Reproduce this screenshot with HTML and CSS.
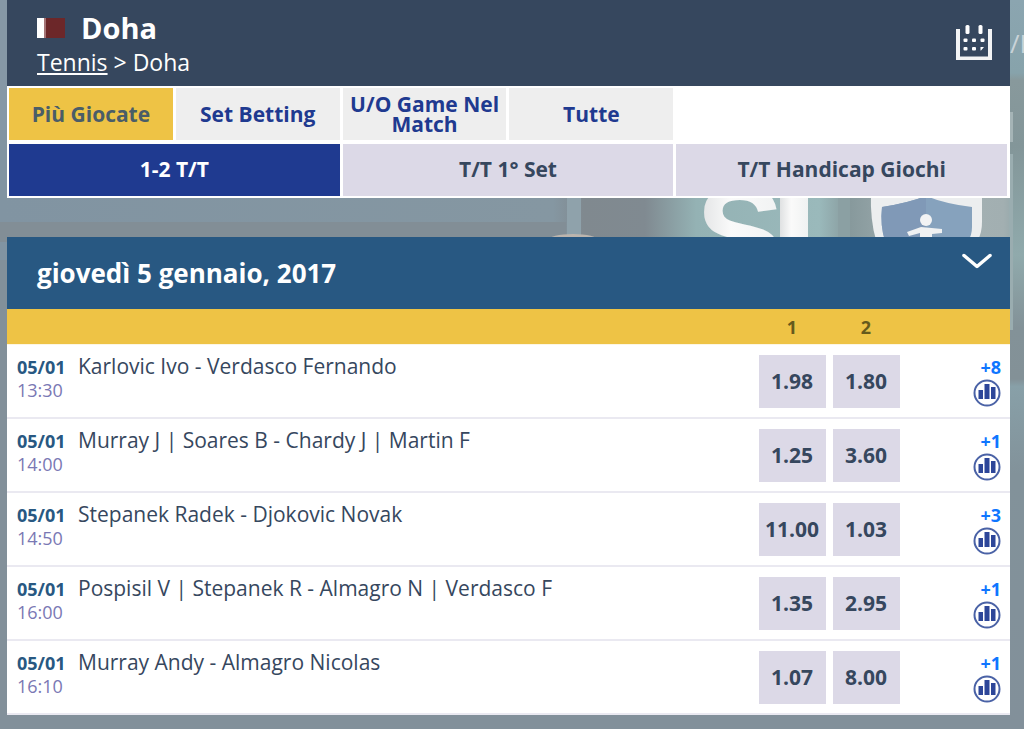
FILE: index.html
```html
<!DOCTYPE html>
<html lang="it">
<head>
    <meta charset="UTF-8">
    <meta name="viewport" content="width=device-width, initial-scale=1.0">
    <title>Doha - Tennis</title>
    <link rel="stylesheet" href="styles.css">
</head>
<body>
    <!-- Backdrop artwork -->
    <svg class="backdrop" viewBox="0 0 1024 729" preserveAspectRatio="xMaxYMin slice" aria-hidden="true">
        <defs>
            <linearGradient id="wall" x1="0" x2="1" y1="0" y2="0">
                <stop offset="0" stop-color="#8194a2"/>
                <stop offset="0.54" stop-color="#8597a2"/>
                <stop offset="0.57" stop-color="#80898f"/>
                <stop offset="0.63" stop-color="#808a91"/>
                <stop offset="0.68" stop-color="#94b2b4"/>
                <stop offset="0.8" stop-color="#9ab9bb"/>
                <stop offset="0.83" stop-color="#87999c"/>
                <stop offset="0.9" stop-color="#a5b2b5"/>
                <stop offset="0.98" stop-color="#a2afb1"/>
                <stop offset="1" stop-color="#8aa2a5"/>
            </linearGradient>
            <linearGradient id="side" x1="0" x2="0" y1="0" y2="1">
                <stop offset="0" stop-color="#8ba5b0"/>
                <stop offset="0.1" stop-color="#87a3ab"/>
                <stop offset="0.11" stop-color="#88999c"/>
                <stop offset="0.2" stop-color="#839699"/>
                <stop offset="0.35" stop-color="#90aaac"/>
                <stop offset="0.45" stop-color="#839298"/>
                <stop offset="0.52" stop-color="#839197"/>
                <stop offset="0.53" stop-color="#88a0a8"/>
                <stop offset="0.65" stop-color="#82929a"/>
                <stop offset="1" stop-color="#82909a"/>
            </linearGradient>
            <linearGradient id="letter" x1="0" x2="1" y1="0" y2="0">
                <stop offset="0" stop-color="#dfe1e2"/>
                <stop offset="0.4" stop-color="#fafafa"/>
                <stop offset="1" stop-color="#f0f2f2"/>
            </linearGradient>
        </defs>
        <rect width="1024" height="729" fill="#82909a"/>
        <rect width="1024" height="260" fill="url(#wall)"/>
        <rect y="222" width="566" height="20" fill="#828e96"/>
        <rect y="0" width="8" height="130" fill="#8698a6"/>
        <rect x="567" y="190" width="14" height="50" fill="#8fa2ab"/>
        <ellipse cx="573" cy="240" rx="25" ry="6" fill="#bcb5ae"/>
        <rect x="838" y="190" width="12" height="50" fill="#8ba0a3"/>
        <text class="sign" x="696" y="279" fill="url(#letter)">S</text>
        <rect x="780" y="190" width="28" height="50" fill="url(#letter)"/>
        <path d="M871 192h111v30q0 10-4 18H876q-6-20-5-48z" fill="#eceeef"/>
        <path d="M882 207q26-4 44-11 20 8 46 11v20q0 8-4 14h-83q-5-16-3-34z" fill="#86a2bd"/>
        <path d="M882 207q26-4 44-11v45h-41q-5-16-3-34z" fill="#8099b7"/>
        <circle cx="926" cy="220" r="6" fill="#f2f3f4"/>
        <path d="M907 232l14-5 21 2v4l-10 1v6h-12v-7l-11 3z" fill="#eff1f2"/>
        <rect x="1010" width="14" height="729" fill="url(#side)"/>
        <rect x="1009" y="112" width="4" height="30" fill="#a5b4b6"/>
        <rect x="1009" y="154" width="4" height="176" fill="#9aadb0"/>
        <text class="sign-small" x="1010" y="53">/I</text>
    </svg>

    <div class="container">
        <header class="header">
            <div>
                <h1>
                    <svg class="flag" viewBox="0 0 28 20" aria-hidden="true">
                        <rect width="28" height="20" fill="#6c2729"/>
                        <rect width="7" height="20" fill="#fff"/>
                        <rect x="7" width="2" height="20" fill="#a47476"/>
                    </svg>
                    Doha
                </h1>
                <nav class="breadcrumb"><a href="#">Tennis</a> &gt; Doha</nav>
            </div>
            <button class="icon-btn calendar-btn" aria-label="Calendario">
                <svg width="36" height="36" viewBox="0 0 36 36" fill="#fff">
                    <path d="M0 4h4v27.500h28V4H36v31H0z" fill-opacity="0.94"/>
                    <rect x="9.500" y="0" width="4" height="9" rx="1.500"/>
                    <rect x="22.500" y="0" width="4" height="9" rx="1.500"/>
                    <rect x="7.500" y="13.500" width="4" height="3.500" rx="1"/>
                    <rect x="16" y="13.500" width="4" height="3.500" rx="1"/>
                    <rect x="24.500" y="13.500" width="4" height="3.500" rx="1"/>
                    <rect x="7.500" y="22" width="4" height="3.500" rx="1"/>
                    <rect x="16" y="22" width="4" height="3.500" rx="1"/>
                    <path d="M24.500 22H28l-3 3.500h-.5z"/>
                </svg>
            </button>
        </header>

        <div class="tabs">
            <button class="tab active">Più Giocate</button>
            <button class="tab">Set Betting</button>
            <button class="tab">U/O Game Nel Match</button>
            <button class="tab">Tutte</button>
            <button class="tab market market-first active">1-2 T/T</button>
            <button class="tab market">T/T 1° Set</button>
            <button class="tab market">T/T Handicap Giochi</button>
        </div>

        <section class="events">
            <div class="date-bar">
                <h2>giovedì 5 gennaio, 2017</h2>
                <button class="icon-btn" aria-label="Chiudi">
                    <svg width="30" height="16" viewBox="0 0 30 16" fill="none" stroke="#fff" stroke-width="3.500" stroke-linecap="round" stroke-linejoin="round">
                        <path d="M2 2.500L15 13.500L28 2.500"/>
                    </svg>
                </button>
            </div>

            <table>
                <thead>
                    <tr>
                        <th class="col-time"></th>
                        <th></th>
                        <th class="col-odd">1</th>
                        <th class="col-odd">2</th>
                        <th class="col-more"></th>
                    </tr>
                </thead>
                <tbody>
                    <tr>
                        <td class="time"><b>05/01</b>13:30</td>
                        <td class="match">Karlovic Ivo - Verdasco Fernando</td>
                        <td><button class="odd">1.98</button></td>
                        <td><button class="odd">1.80</button></td>
                        <td class="more"><a href="#">+8 <svg class="stats"><use href="#stats-icon"/></svg></a></td>
                    </tr>
                    <tr>
                        <td class="time"><b>05/01</b>14:00</td>
                        <td class="match">Murray J | Soares B - Chardy J | Martin F</td>
                        <td><button class="odd">1.25</button></td>
                        <td><button class="odd">3.60</button></td>
                        <td class="more"><a href="#">+1 <svg class="stats"><use href="#stats-icon"/></svg></a></td>
                    </tr>
                    <tr>
                        <td class="time"><b>05/01</b>14:50</td>
                        <td class="match">Stepanek Radek - Djokovic Novak</td>
                        <td><button class="odd">11.00</button></td>
                        <td><button class="odd">1.03</button></td>
                        <td class="more"><a href="#">+3 <svg class="stats"><use href="#stats-icon"/></svg></a></td>
                    </tr>
                    <tr>
                        <td class="time"><b>05/01</b>16:00</td>
                        <td class="match">Pospisil V | Stepanek R - Almagro N | Verdasco F</td>
                        <td><button class="odd">1.35</button></td>
                        <td><button class="odd">2.95</button></td>
                        <td class="more"><a href="#">+1 <svg class="stats"><use href="#stats-icon"/></svg></a></td>
                    </tr>
                    <tr>
                        <td class="time"><b>05/01</b>16:10</td>
                        <td class="match">Murray Andy - Almagro Nicolas</td>
                        <td><button class="odd">1.07</button></td>
                        <td><button class="odd">8.00</button></td>
                        <td class="more"><a href="#">+1 <svg class="stats"><use href="#stats-icon"/></svg></a></td>
                    </tr>
                </tbody>
            </table>
        </section>
    </div>

    <!-- Shared icon -->
    <svg width="0" height="0" class="sprite" aria-hidden="true">
        <symbol id="stats-icon" viewBox="0 0 28 28">
            <circle cx="14" cy="14" r="12.500" fill="#fff" stroke="#4a62a6" stroke-width="2"/>
            <path d="M5.500 11H10v9H5.500zM11.500 5H16.500v15H11.500zM18 8H22.500v12H18z" fill="#2d4699"/>
        </symbol>
    </svg>
</body>
</html>
```
FILE: styles.css
```css
* {
    margin: 0;
    padding: 0;
    box-sizing: border-box;
}

body {
    font-family: 'Open Sans', sans-serif;
    background: #82909a;
    color: #36475e;
    min-height: 100vh;
}

button {
    font-family: inherit;
    border: none;
    cursor: pointer;
}

svg {
    display: block;
}

.backdrop {
    position: absolute;
    top: 0;
    left: 0;
    width: 100%;
    height: 100%;
    z-index: -1;
}

.sign {
    font-family: 'Liberation Sans', sans-serif;
    font-size: 132px;
    font-weight: bold;
}

.sign-small {
    font-size: 26px;
    fill: #c9d3d8;
}

.sprite {
    position: absolute;
}

.container {
    padding: 0 14px 14px 7px;
}

.header {
    display: flex;
    justify-content: space-between;
    align-items: flex-start;
    background: #36475e;
    color: white;
    height: 86px;
    padding: 9px 18px 0 30px;
}

.header h1 {
    display: flex;
    align-items: center;
    gap: 16px;
    font-size: 29px;
    font-weight: bold;
    line-height: 37px;
}

.flag {
    width: 28px;
    height: 20px;
}

.breadcrumb {
    font-size: 23px;
    line-height: 32px;
}

.breadcrumb a {
    color: white;
}

.icon-btn {
    background: none;
}

.calendar-btn {
    margin-top: 16px;
}

.tabs {
    display: grid;
    grid-template-columns: repeat(6, 1fr);
    gap: 4px 3px;
    background: white;
    padding: 2px 3px 2px 2px;
    margin-bottom: 39px;
}

.tab {
    height: 52px;
    background: #eeeeee;
    color: #1f3a90;
    font-size: 21px;
    font-weight: bold;
    line-height: 20px;
}

.tab.active {
    background: #eec345;
    color: #4a5d68;
}

.tab.market {
    grid-column: span 2;
    padding-bottom: 2px;
    background: #dcd9e7;
    color: #36475e;
}

.tab.market-first {
    grid-column: 1 / span 2;
}

.tab.market.active {
    background: #1f3a90;
    color: white;
}

.date-bar {
    display: flex;
    justify-content: space-between;
    align-items: flex-start;
    background: #285882;
    color: white;
    height: 72px;
    padding: 16px 18px 0 30px;
}

.date-bar h2 {
    font-size: 26px;
    font-weight: bold;
    line-height: 40px;
}

table {
    width: 100%;
    table-layout: fixed;
    border-spacing: 0;
    background: white;
}

th {
    height: 36px;
    background: #eec345;
    border-bottom: 1px solid #fdf6e3;
    color: #665a1c;
    font-size: 18px;
}

.col-time {
    width: 71px;
}

.col-odd {
    width: 74px;
}

.col-more {
    width: 107px;
}

td {
    height: 74px;
    border-bottom: 2px solid #eae9f1;
    vertical-align: top;
}

.time {
    padding: 11px 0 0 10px;
    font-size: 18px;
    line-height: 23px;
    color: #7a78b4;
}

.time b {
    display: block;
    color: #285882;
}

.match {
    padding-top: 6px;
    font-size: 21px;
    line-height: 30px;
}

.odd {
    display: block;
    width: 67px;
    height: 53px;
    margin: 10px auto 0;
    padding-bottom: 2px;
    background: #dcd9e7;
    color: #36475e;
    font-size: 21px;
    font-weight: bold;
}

.more {
    padding: 11px 9px 0 0;
}

.more a {
    display: flex;
    flex-direction: column;
    align-items: flex-end;
    color: #0f76ff;
    font-size: 18px;
    font-weight: bold;
    line-height: 23px;
    text-decoration: none;
}

.stats {
    width: 28px;
    height: 28px;
}
```
